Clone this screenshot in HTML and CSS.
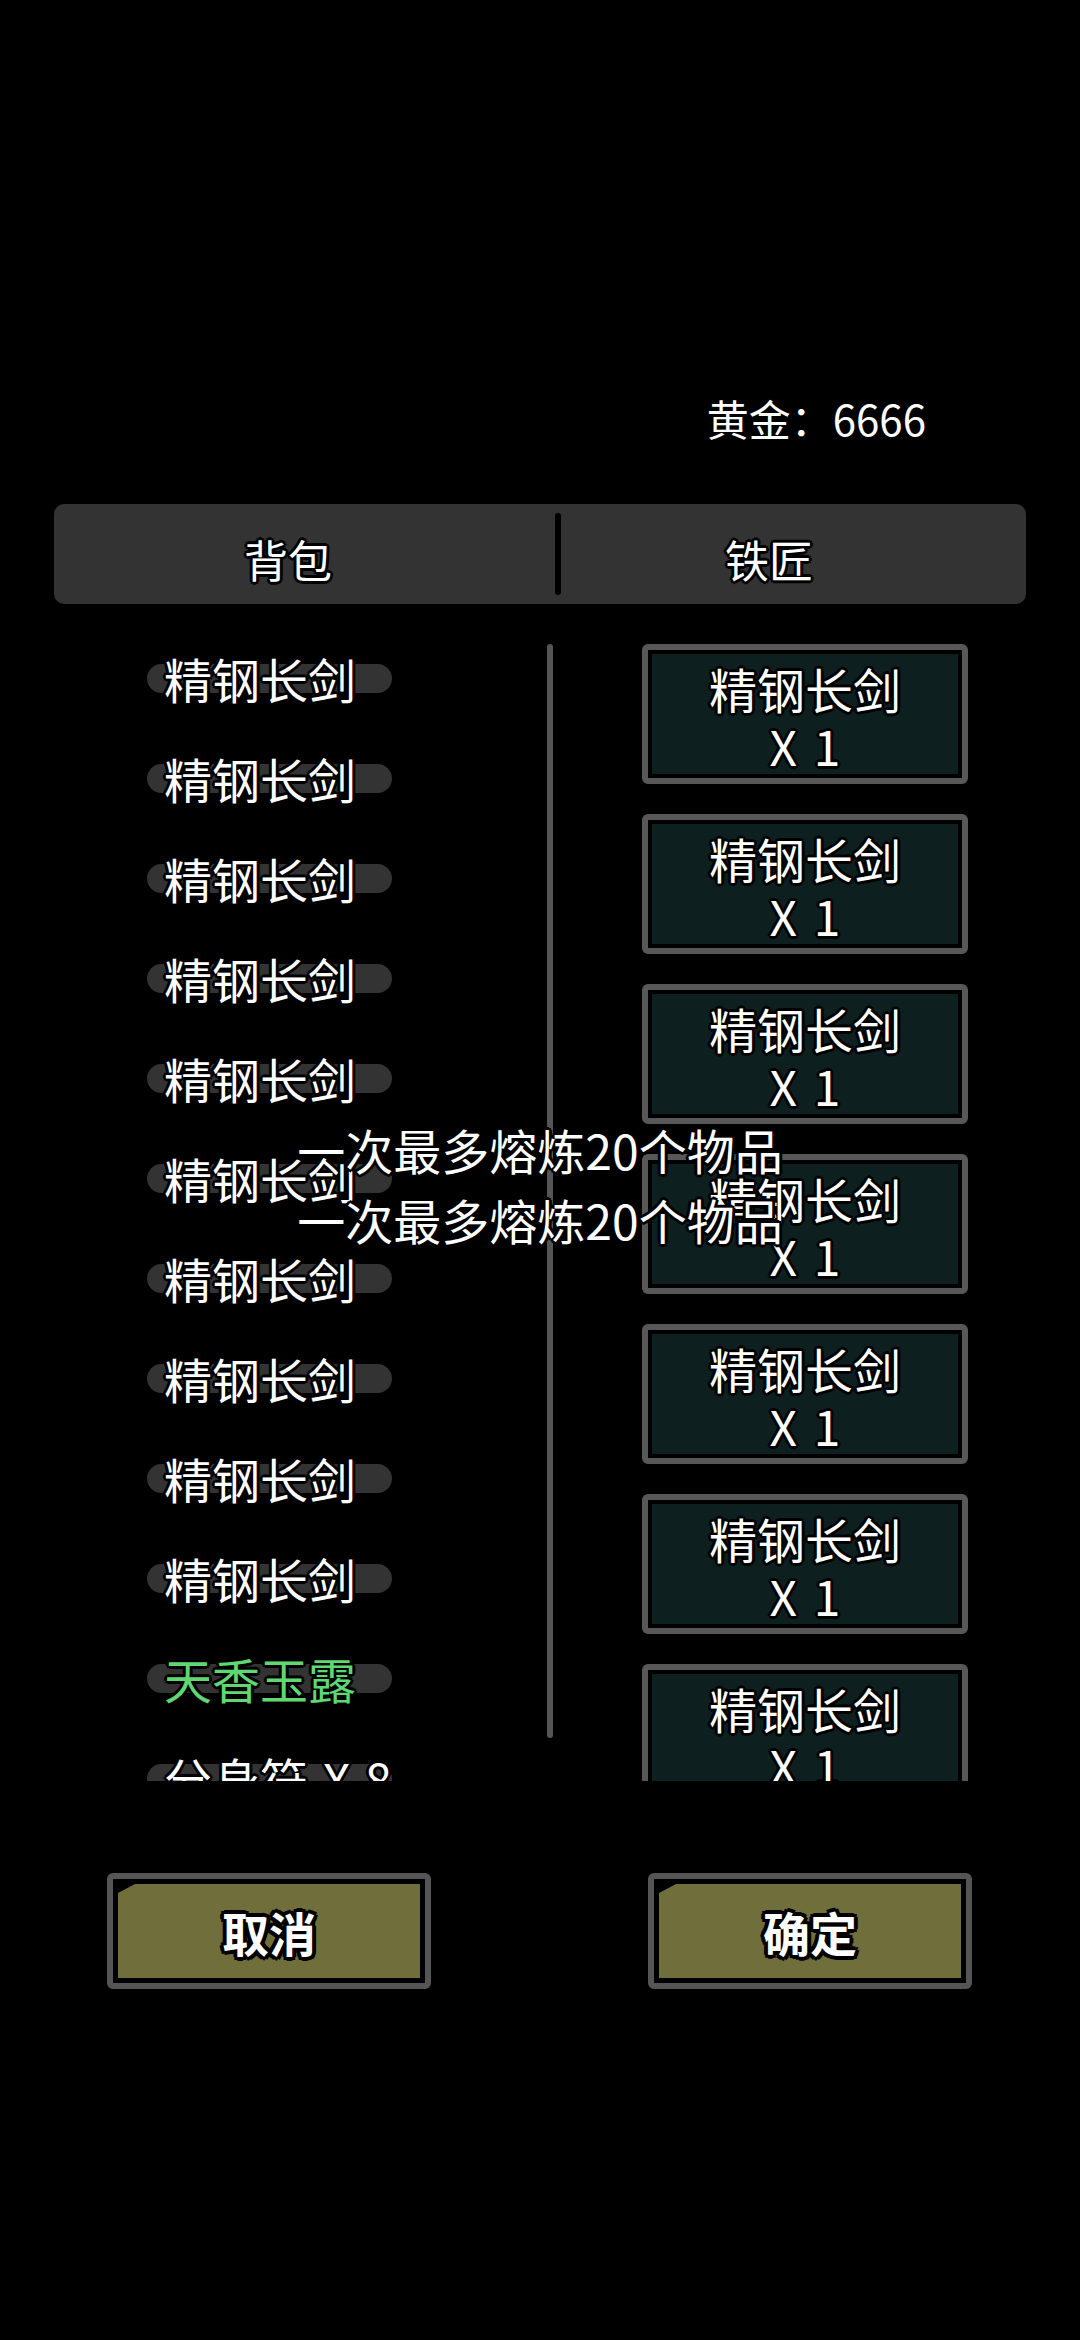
FILE: index.html
```html
<!DOCTYPE html>
<html lang="zh-CN">
<head>
<meta charset="utf-8">
<title>熔炼</title>
<link rel="stylesheet" href="styles.css">
</head>
<body>
<div class="screen">
  <div class="gold-row"><span class="gold">黄金：6666</span></div>

  <div class="tabs">
    <div class="tab tab-bag"><span class="tab-label">背包</span></div>
    <div class="tab-divider"></div>
    <div class="tab tab-smith"><span class="tab-label">铁匠</span></div>
  </div>

  <div class="panes">
    <div class="bag">
      <div class="row"><div class="pill"><span class="name">精钢长剑</span></div></div>
      <div class="row"><div class="pill"><span class="name">精钢长剑</span></div></div>
      <div class="row"><div class="pill"><span class="name">精钢长剑</span></div></div>
      <div class="row"><div class="pill"><span class="name">精钢长剑</span></div></div>
      <div class="row"><div class="pill"><span class="name">精钢长剑</span></div></div>
      <div class="row"><div class="pill"><span class="name">精钢长剑</span></div></div>
      <div class="row"><div class="pill"><span class="name">精钢长剑</span></div></div>
      <div class="row"><div class="pill"><span class="name">精钢长剑</span></div></div>
      <div class="row"><div class="pill"><span class="name">精钢长剑</span></div></div>
      <div class="row"><div class="pill"><span class="name">精钢长剑</span></div></div>
      <div class="row"><div class="pill"><span class="name green">天香玉露</span></div></div>
      <div class="row"><div class="pill"><span class="name">分身符 X 8</span></div></div>
    </div>
    <div class="scrollbar"></div>
    <div class="smith">
      <div class="card"><div class="card-inner"><div>精钢长剑</div><div class="qty">X 1</div></div></div>
      <div class="card"><div class="card-inner"><div>精钢长剑</div><div class="qty">X 1</div></div></div>
      <div class="card"><div class="card-inner"><div>精钢长剑</div><div class="qty">X 1</div></div></div>
      <div class="card"><div class="card-inner"><div>精钢长剑</div><div class="qty">X 1</div></div></div>
      <div class="card"><div class="card-inner"><div>精钢长剑</div><div class="qty">X 1</div></div></div>
      <div class="card"><div class="card-inner"><div>精钢长剑</div><div class="qty">X 1</div></div></div>
      <div class="card"><div class="card-inner"><div>精钢长剑</div><div class="qty">X 1</div></div></div>
    </div>
  </div>

  <div class="actions">
    <div class="btn"><div class="btn-face">取消</div></div>
    <div class="btn"><div class="btn-face">确定</div></div>
  </div>

  <div class="toast">
    <div>一次最多熔炼20个物品</div>
    <div>一次最多熔炼20个物品</div>
  </div>
</div>
</body>
</html>
```

FILE: styles.css
```css
html, body {
  margin: 0;
  padding: 0;
  background: #000;
}

body {
  font-family: "Noto Sans CJK SC", "Noto Sans", sans-serif;
  color: #fff;
}

.screen {
  position: relative;
  width: 1080px;
  height: 2340px;
  overflow: hidden;
  background: #000;
}

.gold-row {
  display: flex;
  justify-content: flex-end;
  padding-top: 388px;
  padding-right: 154px;
  height: 60px;
}

.gold {
  font-size: 42px;
  line-height: 60px;
  color: #fff;
}

.tabs {
  display: flex;
  align-items: center;
  margin: 56px 54px 0;
  height: 100px;
  background: #333;
  border-radius: 10px;
}

.tab {
  display: flex;
  align-items: center;
  justify-content: center;
  height: 100%;
  box-sizing: border-box;
  padding-top: 10px;
}

.tab-bag {
  width: 501px;
  padding-right: 33px;
}

.tab-smith {
  flex: 1;
  padding-right: 49px;
}

.tab-label {
  font-size: 44px;
  line-height: 60px;
  text-shadow: -2px -2px 0 #000, 2px -2px 0 #000, -2px 2px 0 #000, 2px 2px 0 #000,
    0 -3px 0 #000, 0 3px 0 #000, -3px 0 0 #000, 3px 0 0 #000;
}

.tab-divider {
  width: 6px;
  height: 82px;
  background: #000;
  border-radius: 3px;
}

.panes {
  display: flex;
  margin-top: 40px;
  height: 1137px;
}

.bag {
  width: 547px;
  height: 100%;
  overflow: hidden;
}

.row {
  height: 100px;
  padding-top: 20px;
  box-sizing: border-box;
}

.pill {
  width: 245px;
  height: 29px;
  margin-left: 147px;
  background: #333;
  border-radius: 15px;
  white-space: nowrap;
}

.name {
  display: inline-block;
  margin-left: 17px;
  font-size: 48px;
  line-height: 29px;
  color: #fff;
  word-spacing: 4px;
  text-shadow: -2px -2px 0 #000, 2px -2px 0 #000, -2px 2px 0 #000, 2px 2px 0 #000,
    0 -3px 0 #000, 0 3px 0 #000, -3px 0 0 #000, 3px 0 0 #000;
}

.name.green {
  color: #5fd873;
}

.scrollbar {
  align-self: flex-start;
  width: 6px;
  height: 1094px;
  background: #555;
  border-radius: 3px;
}

.smith {
  flex: 1;
  height: 100%;
  overflow: hidden;
  padding-left: 89px;
}

.card {
  width: 326px;
  height: 140px;
  box-sizing: border-box;
  border: 6px solid #585858;
  border-radius: 6px;
  padding: 4px;
  background: #000;
  margin-bottom: 30px;
}

.card-inner {
  height: 100%;
  box-sizing: border-box;
  padding-top: 6px;
  background: #0d1f1f;
  text-align: center;
  font-size: 48px;
  line-height: 57px;
  text-shadow: -2px -2px 0 #000, 2px -2px 0 #000, -2px 2px 0 #000, 2px 2px 0 #000,
    0 -3px 0 #000, 0 3px 0 #000, -3px 0 0 #000, 3px 0 0 #000;
}

.qty {
  word-spacing: 6px;
}

.actions {
  display: flex;
  gap: 217px;
  margin-top: 92px;
  padding-left: 107px;
}

.btn {
  width: 324px;
  height: 116px;
  box-sizing: border-box;
  border: 6px solid #555;
  border-radius: 6px;
  padding: 5px;
  background: #000;
}

.btn-face {
  height: 100%;
  display: flex;
  align-items: center;
  justify-content: center;
  background: #706f3b;
  clip-path: polygon(17px 0, 100% 0, 100% 100%, 0 100%, 0 9px);
  font-size: 47px;
  font-weight: 700;
  color: #fff;
  text-shadow: -3px -3px 0 #000, 3px -3px 0 #000, -3px 3px 0 #000, 3px 3px 0 #000,
    0 -4px 0 #000, 0 4px 0 #000, -4px 0 0 #000, 4px 0 0 #000;
}

.toast {
  position: absolute;
  left: 0;
  right: 0;
  top: 1114px;
  text-align: center;
  font-size: 48px;
  line-height: 70px;
  color: #fff;
  text-shadow: -2px -2px 0 #000, 2px -2px 0 #000, -2px 2px 0 #000, 2px 2px 0 #000,
    0 -3px 0 #000, 0 3px 0 #000, -3px 0 0 #000, 3px 0 0 #000;
}
```
